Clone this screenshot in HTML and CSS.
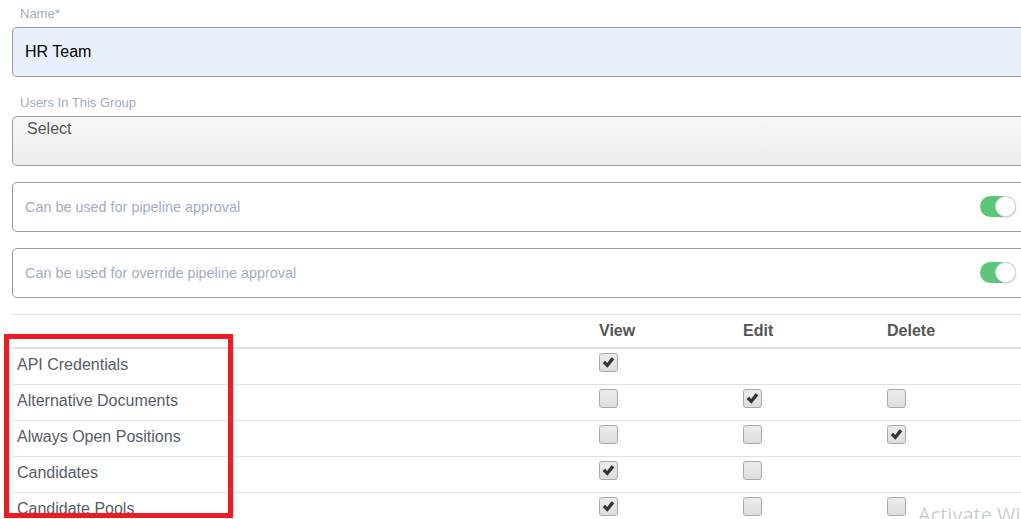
FILE: index.html
```html
<!DOCTYPE html>
<html>
<head>
<meta charset="utf-8">
<link rel="stylesheet" href="styles.css">
</head>
<body>
<div class="page">
  <div class="field">
    <div class="label">Name*</div>
    <div class="input input-name">HR Team</div>
  </div>
  <div class="field field-gap">
    <div class="label">Users In This Group</div>
    <div class="input input-select">Select</div>
  </div>
  <div class="switch-box">
    <span class="switch-text">Can be used for pipeline approval</span>
    <span class="toggle"></span>
  </div>
  <div class="switch-box">
    <span class="switch-text">Can be used for override pipeline approval</span>
    <span class="toggle"></span>
  </div>

  <div class="perm-table">
    <div class="perm-head">
      <div class="cell-name"></div>
      <div class="cell-col">View</div>
      <div class="cell-col">Edit</div>
      <div class="cell-col">Delete</div>
    </div>
    <div class="perm-row">
      <div class="cell-name">API Credentials</div>
      <div class="cell-box"><span class="cb checked"><svg viewBox="0 0 18 18"><path d="M2.8 9.6 L5.6 7.2 L7.6 9.6 L12.2 3.4 L15.2 5.6 L7.9 14.6 Z" fill="#333"/></svg></span></div>
      <div class="cell-box"></div>
      <div class="cell-box"></div>
    </div>
    <div class="perm-row">
      <div class="cell-name">Alternative Documents</div>
      <div class="cell-box"><span class="cb"></span></div>
      <div class="cell-box"><span class="cb checked"><svg viewBox="0 0 18 18"><path d="M2.8 9.6 L5.6 7.2 L7.6 9.6 L12.2 3.4 L15.2 5.6 L7.9 14.6 Z" fill="#333"/></svg></span></div>
      <div class="cell-box"><span class="cb"></span></div>
    </div>
    <div class="perm-row">
      <div class="cell-name">Always Open Positions</div>
      <div class="cell-box"><span class="cb"></span></div>
      <div class="cell-box"><span class="cb"></span></div>
      <div class="cell-box"><span class="cb checked"><svg viewBox="0 0 18 18"><path d="M2.8 9.6 L5.6 7.2 L7.6 9.6 L12.2 3.4 L15.2 5.6 L7.9 14.6 Z" fill="#333"/></svg></span></div>
    </div>
    <div class="perm-row">
      <div class="cell-name">Candidates</div>
      <div class="cell-box"><span class="cb checked"><svg viewBox="0 0 18 18"><path d="M2.8 9.6 L5.6 7.2 L7.6 9.6 L12.2 3.4 L15.2 5.6 L7.9 14.6 Z" fill="#333"/></svg></span></div>
      <div class="cell-box"><span class="cb"></span></div>
      <div class="cell-box"></div>
    </div>
    <div class="perm-row">
      <div class="cell-name">Candidate Pools</div>
      <div class="cell-box"><span class="cb checked"><svg viewBox="0 0 18 18"><path d="M2.8 9.6 L5.6 7.2 L7.6 9.6 L12.2 3.4 L15.2 5.6 L7.9 14.6 Z" fill="#333"/></svg></span></div>
      <div class="cell-box"><span class="cb"></span></div>
      <div class="cell-box"><span class="cb"></span></div>
    </div>
  </div>
</div>
<div class="highlight"></div>
<div class="watermark">Activate Wi</div>
</body>
</html>
```
FILE: styles.css
```css
html, body {
  margin: 0;
  padding: 0;
  overflow: hidden;
  background: #fff;
  font-family: "Liberation Sans", Arial, sans-serif;
}

.page {
  width: 1019px;
  padding: 5px 0 0 12px;
}

.label {
  font-size: 13px;
  line-height: 17px;
  color: #a0abc0;
  padding-left: 8px;
  margin-bottom: 5px;
}

.field-gap {
  margin-top: 17px;
}

.input {
  box-sizing: border-box;
  height: 50px;
  border: 1px solid #9a9a9a;
  border-radius: 5px;
  font-size: 16px;
}

.input-name {
  background: #e8f0fe;
  color: #000;
  padding-left: 12px;
  line-height: 47px;
}

.input-select {
  background: linear-gradient(to bottom, #f7f7f7, #ededed);
  color: #555;
  padding: 2px 0 0 14px;
  line-height: 20px;
}

.switch-box {
  box-sizing: border-box;
  height: 50px;
  margin-top: 16px;
  border: 1px solid #9a9a9a;
  border-radius: 5px;
  display: flex;
  align-items: center;
  justify-content: space-between;
  padding: 0 14px 0 12px;
}

.switch-text {
  font-size: 14.4px;
  color: #a3acbf;
}

.toggle {
  position: relative;
  width: 36px;
  height: 21px;
  border-radius: 11px;
  background: #5cc779;
  margin-top: -1px;
}

.toggle::after {
  content: "";
  position: absolute;
  right: 0;
  top: 0;
  box-sizing: border-box;
  width: 21px;
  height: 21px;
  border-radius: 50%;
  background: #fff;
  border: 1px solid #dcdcdc;
  box-shadow: 0 1px 2px rgba(0, 0, 0, 0.12);
}

.perm-table {
  margin-top: 16px;
  border-top: 1px solid #dee2e6;
}

.perm-head,
.perm-row {
  display: grid;
  grid-template-columns: 575px 144px 144px 1fr;
}

.perm-head {
  height: 32px;
  align-items: center;
  border-bottom: 2px solid #dee2e6;
  font-size: 16px;
  font-weight: bold;
  color: #555;
}

.perm-head .cell-col {
  padding-left: 12px;
}

.perm-row {
  height: 35px;
  border-bottom: 1px solid #dee2e6;
}

.perm-row .cell-name {
  font-size: 16px;
  color: #575c68;
  padding-left: 5px;
  line-height: 32px;
}

.cell-box {
  padding: 4px 0 0 12px;
}

.cb {
  display: block;
  box-sizing: border-box;
  width: 19px;
  height: 19px;
  border: 1px solid #a9a9a9;
  border-radius: 3px;
  background: linear-gradient(to bottom, #ececec, #dcdcdc);
}

.cb svg {
  display: block;
  width: 17px;
  height: 17px;
}

.highlight {
  position: absolute;
  left: 4px;
  top: 334px;
  width: 229px;
  height: 184px;
  box-sizing: border-box;
  border: 5px solid #ed1c24;
}

.watermark {
  position: absolute;
  left: 918px;
  top: 503px;
  font-family: "Open Sans", "DejaVu Sans", sans-serif;
  font-size: 20px;
  line-height: 24px;
  color: rgba(0, 0, 0, 0.22);
  white-space: nowrap;
}
```
